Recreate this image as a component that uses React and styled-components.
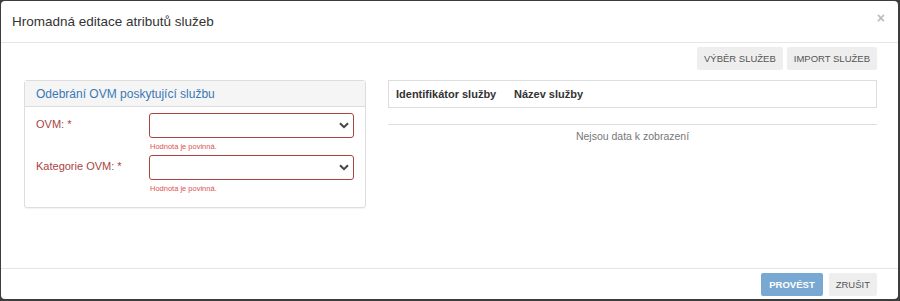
import React from "react";
import styled, { createGlobalStyle } from "styled-components";

const Global = createGlobalStyle`
  html, body {
    margin: 0;
    padding: 0;
    background: #3d3d3d;
    font-family: "Liberation Sans", Arial, sans-serif;
  }
`;

const Modal = styled.div`
  box-sizing: border-box;
  width: 897px;
  height: 298px;
  margin: 1px 0 0 1px;
  background: #fff;
  border-radius: 4px;
  display: flex;
  flex-direction: column;
`;

const Header = styled.div`
  height: 41px;
  flex: none;
  display: flex;
  align-items: center;
  justify-content: space-between;
  padding: 0 11px 0 11px;
  border-bottom: 1px solid #e5e5e5;
`;

const Title = styled.h4`
  margin: 0;
  font-size: 13.5px;
  font-weight: normal;
  color: #333;
`;

const Close = styled.span`
  font-size: 14px;
  font-weight: bold;
  color: #bbb;
  margin-top: -8px;
  margin-right: 2px;
`;

const Body = styled.div`
  flex: 1;
  padding: 4px 21px 0 23px;
`;

const Toolbar = styled.div`
  display: flex;
  justify-content: flex-end;
  gap: 4px;
  margin-bottom: 10px;
`;

const Button = styled.button`
  height: 23px;
  padding: 0 ${(p) => (p.primary ? 8 : 7)}px;
  border: none;
  border-radius: 2px;
  background: ${(p) => (p.primary ? "#79a8d2" : "#eeeeee")};
  color: ${(p) => (p.primary ? "#fff" : "#555")};
  font-family: "Liberation Sans", Arial, sans-serif;
  font-size: 9.5px;
  font-weight: ${(p) => (p.primary ? "bold" : "normal")};
  text-transform: uppercase;
`;

const Columns = styled.div`
  display: flex;
  gap: 22px;
`;

const Panel = styled.div`
  width: 342px;
  box-sizing: border-box;
  border: 1px solid #ddd;
  border-radius: 3px;
  box-shadow: 0 1px 1px rgba(0, 0, 0, 0.05);
  flex: none;
`;

const PanelHeading = styled.div`
  height: 26px;
  box-sizing: border-box;
  background: #f5f5f5;
  border-bottom: 1px solid #ddd;
  padding: 0 11px;
  display: flex;
  align-items: center;
  font-size: 12px;
  color: #3a78b5;
`;

const PanelBody = styled.div`
  padding: 6px 11px 10px 11px;
`;

const FormRow = styled.div`
  display: flex;
  margin-bottom: 4px;
`;

const Label = styled.label`
  width: 113px;
  flex: none;
  font-size: 11px;
  color: #a94442;
  padding-top: 5px;
`;

const Field = styled.div`
  flex: 1;
`;

const Select = styled.div`
  height: 25px;
  box-sizing: border-box;
  border: 1px solid #a94442;
  border-radius: 3px;
  display: flex;
  align-items: center;
  justify-content: flex-end;
  padding-right: 4px;
`;

const Help = styled.div`
  font-size: 7.5px;
  color: #d9534f;
  margin-top: 4px;
  padding-left: 1px;
`;

const Right = styled.div`
  flex: 1;
`;

const TableHead = styled.div`
  height: 28px;
  box-sizing: border-box;
  border: 1px solid #ddd;
  display: flex;
  align-items: center;
  padding-left: 7px;
  font-size: 11px;
  font-weight: bold;
  color: #333;
`;

const Th = styled.span`
  width: ${(p) => p.w}px;
`;

const Empty = styled.div`
  margin-top: 16px;
  border-top: 1px solid #ddd;
  text-align: center;
  padding-top: 5px;
  font-size: 10.5px;
  color: #777;
`;

const Footer = styled.div`
  height: 26px;
  flex: none;
  border-top: 1px solid #e5e5e5;
  display: flex;
  justify-content: flex-end;
  align-items: flex-start;
  padding: 4px 21px 0 0;
  gap: 6px;
`;

const Chevron = () => (
  <svg width="10" height="7" viewBox="0 0 10 7">
    <path d="M1 1.2 L5 5.2 L9 1.2" fill="none" stroke="#444" strokeWidth="2" />
  </svg>
);

function SelectField({ label }) {
  return (
    <FormRow>
      <Label>{label}</Label>
      <Field>
        <Select>
          <Chevron />
        </Select>
        <Help>Hodnota je povinná.</Help>
      </Field>
    </FormRow>
  );
}

export default function App() {
  return (
    <>
      <Global />
      <Modal>
        <Header>
          <Title>Hromadná editace atributů služeb</Title>
          <Close>×</Close>
        </Header>
        <Body>
          <Toolbar>
            <Button>Výběr služeb</Button>
            <Button>Import služeb</Button>
          </Toolbar>
          <Columns>
            <Panel>
              <PanelHeading>Odebrání OVM poskytující službu</PanelHeading>
              <PanelBody>
                <SelectField label="OVM: *" />
                <SelectField label="Kategorie OVM: *" />
              </PanelBody>
            </Panel>
            <Right>
              <TableHead>
                <Th w={118}>Identifikátor služby</Th>
                <Th w={100}>Název služby</Th>
              </TableHead>
              <Empty>Nejsou data k zobrazení</Empty>
            </Right>
          </Columns>
        </Body>
        <Footer>
          <Button primary>Provést</Button>
          <Button>Zrušit</Button>
        </Footer>
      </Modal>
    </>
  );
}
